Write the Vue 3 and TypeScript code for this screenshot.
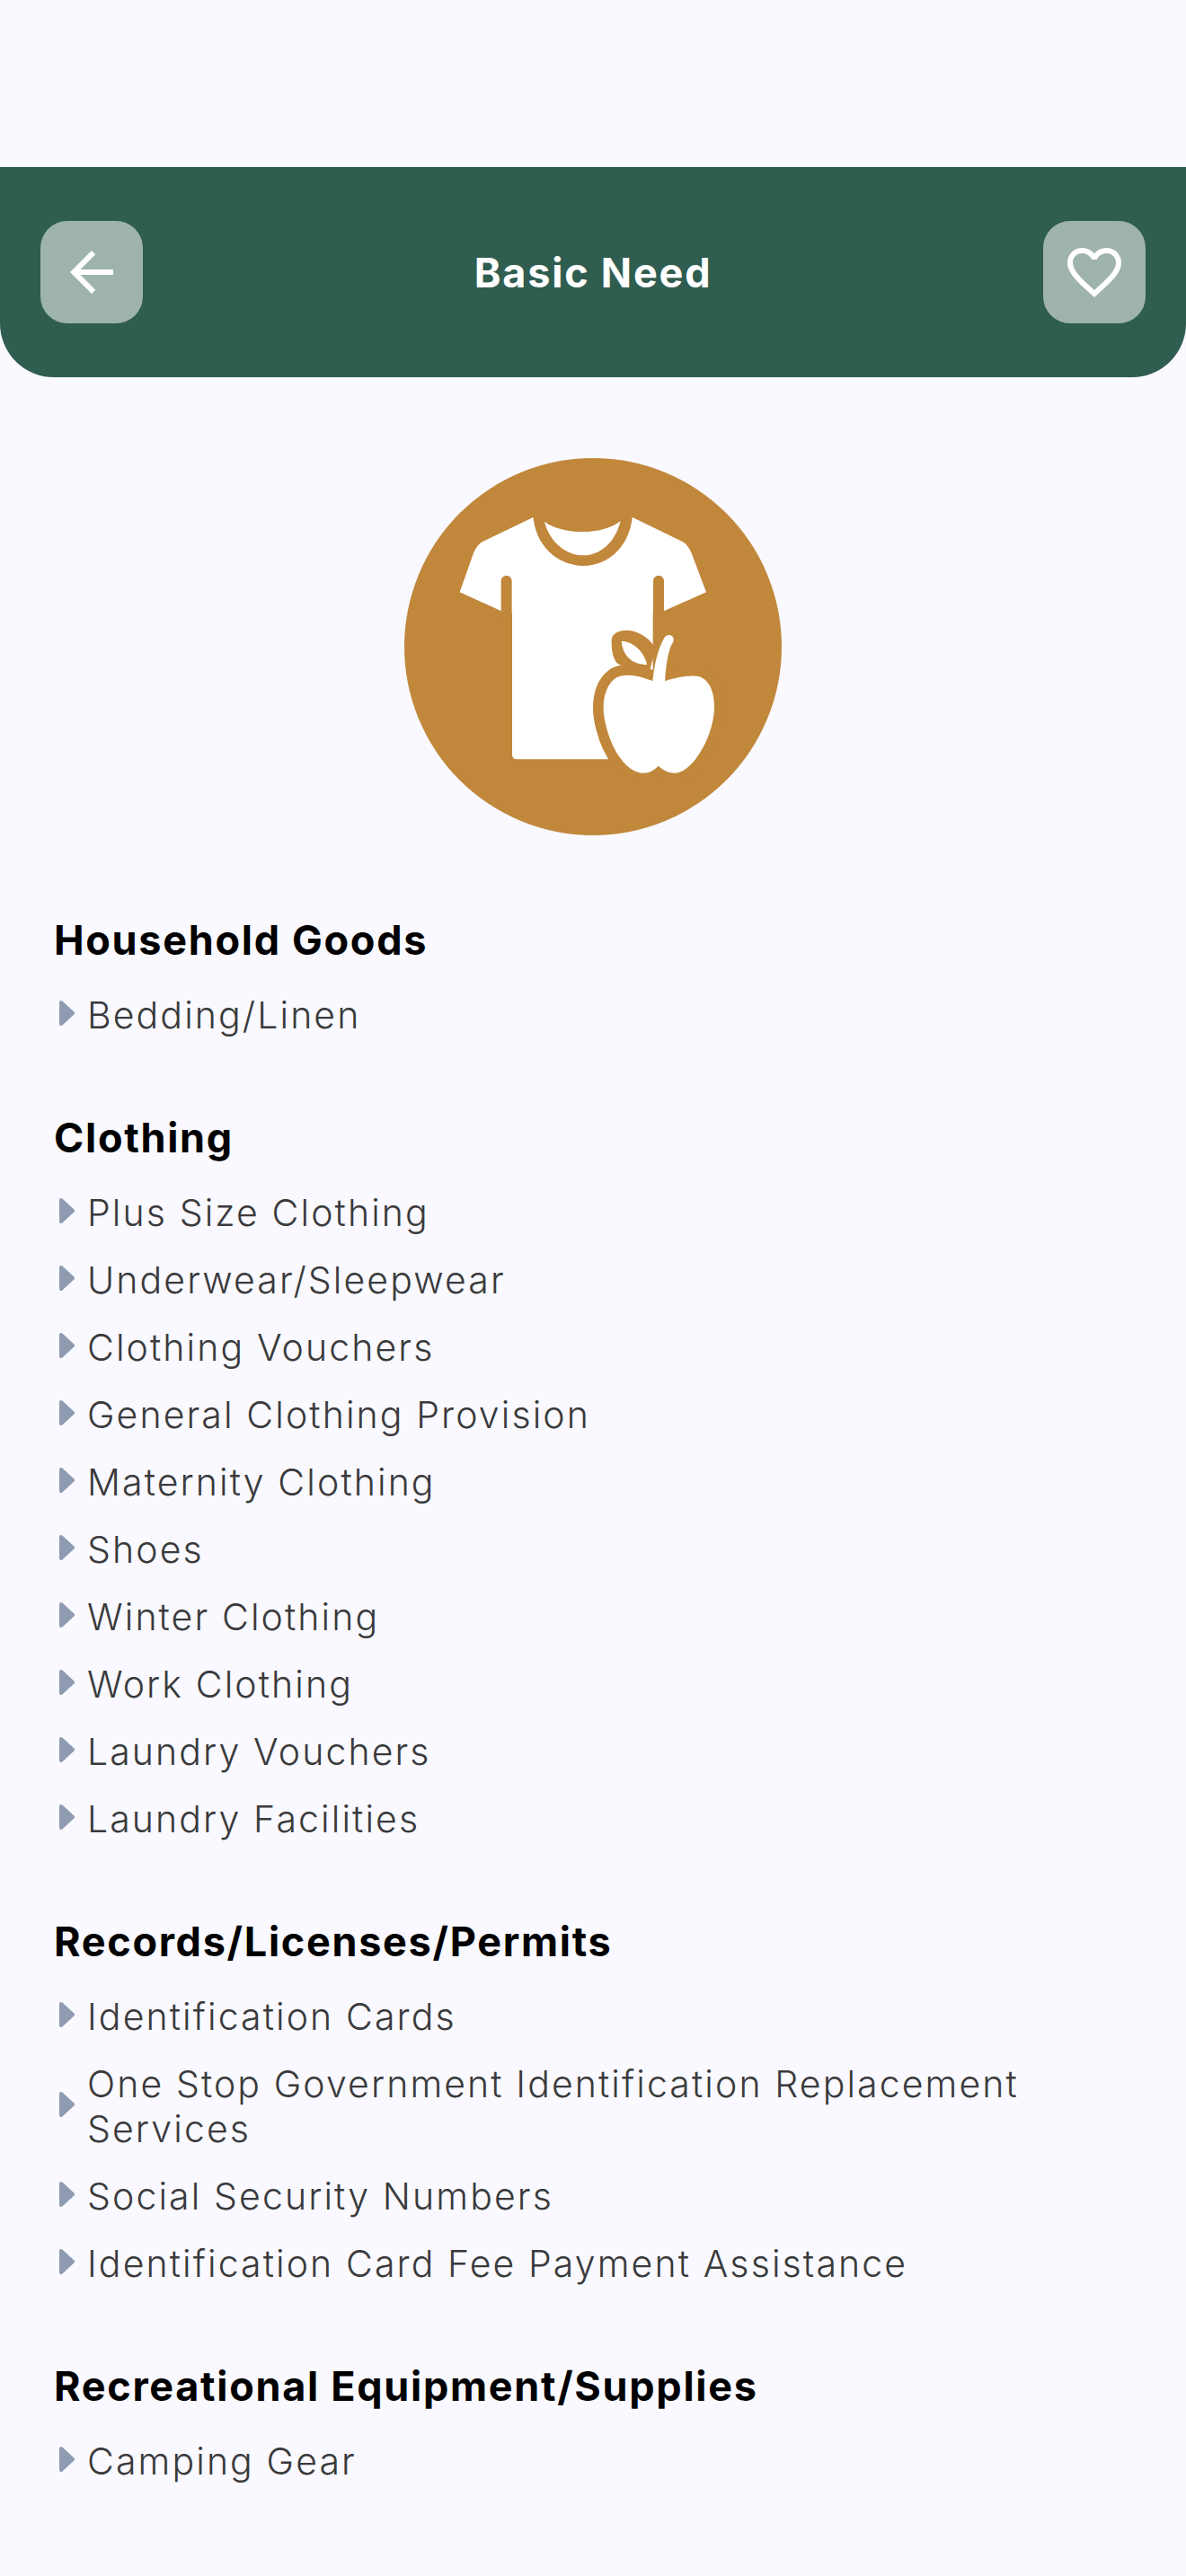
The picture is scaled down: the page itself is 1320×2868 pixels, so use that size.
<script setup lang="ts">
interface Section {
  title: string;
  items: string[];
}

const sections: Section[] = [
  { title: "Household Goods", items: ["Bedding/Linen"] },
  {
    title: "Clothing",
    items: [
      "Plus Size Clothing",
      "Underwear/Sleepwear",
      "Clothing Vouchers",
      "General Clothing Provision",
      "Maternity Clothing",
      "Shoes",
      "Winter Clothing",
      "Work Clothing",
      "Laundry Vouchers",
      "Laundry Facilities",
    ],
  },
  {
    title: "Records/Licenses/Permits",
    items: [
      "Identification Cards",
      "One Stop Government Identification Replacement Services",
      "Social Security Numbers",
      "Identification Card Fee Payment Assistance",
    ],
  },
  { title: "Recreational Equipment/Supplies", items: ["Camping Gear"] },
];
</script>

<template>
  <div class="page">
    <header class="topbar">
      <button class="icon-btn" aria-label="Back">
        <svg viewBox="0 0 24 24" width="72" height="72">
          <path fill="#fff" d="M20 11H7.83l5.59-5.59L12 4l-8 8 8 8 1.41-1.41L7.83 13H20v-2z" />
        </svg>
      </button>
      <h1 class="title">Basic Need</h1>
      <button class="icon-btn" aria-label="Favourite">
        <svg viewBox="0 0 24 24" width="72" height="72">
          <path fill="#fff" d="M16.5 3c-1.74 0-3.41.81-4.5 2.09C10.91 3.81 9.24 3 7.5 3 4.42 3 2 5.42 2 8.5c0 3.78 3.4 6.86 8.55 11.54L12 21.35l1.45-1.32C18.6 15.36 22 12.28 22 8.5 22 5.42 19.58 3 16.5 3zm-4.4 15.55l-.1.1-.1-.1C7.14 14.24 4 11.39 4 8.5 4 6.5 5.5 5 7.5 5c1.54 0 3.04.99 3.57 2.36h1.87C13.46 5.99 14.96 5 16.5 5c2 0 3.5 1.5 3.5 3.5 0 2.89-3.14 5.74-7.9 10.05z" />
        </svg>
      </button>
    </header>

    <main class="content">
      <svg class="hero" viewBox="60 60 1260 1260" width="420" height="420">
        <circle cx="690" cy="690" r="630" fill="#c1873b" />
        <!-- shirt -->
        <path fill="#fff" d="M490 258 L320 340 Q302 350 290 380 L245 508 L400 578 L420 578 V1050 Q420 1066 436 1066 H890 V578 H910 L1068 508 L1020 380 Q1008 350 990 340 L822 258 Z" />
        <path fill="none" stroke="#c1873b" stroke-width="36" stroke-linecap="round" d="M401 470 V600 M909 470 V660" />
        <path fill="#c1873b" d="M490 250 C495 350 570 420 658 420 C745 420 815 350 822 250 Z" />
        <path fill="#fff" d="M528 272 C590 318 725 318 782 270 C765 340 715 385 658 385 C600 385 545 340 528 272 Z" />
        <!-- apple -->
        <path fill="#fff" stroke="#c1873b" stroke-width="70" stroke-linejoin="round" paint-order="stroke" d="M890 805 C850 790 800 775 765 795 C725 825 715 890 735 960 C755 1040 805 1112 858 1112 C880 1112 895 1102 908 1088 C925 1102 940 1112 965 1112 C1020 1112 1095 990 1095 890 C1095 830 1070 790 1035 788 C1000 785 960 795 930 805 Z" />
        <path fill="#c1873b" d="M752 672 C750 640 790 630 825 638 C865 650 895 680 898 700 L880 768 C840 765 790 760 770 745 C755 725 752 700 752 672 Z" />
        <path fill="#fff" d="M785 672 C815 670 860 700 870 750 C825 750 790 725 785 672 Z" />
        <path fill="#fff" d="M888 812 C895 750 905 700 928 660 C935 648 950 648 957 658 C962 668 958 676 952 684 C940 710 932 760 930 812 Z" />
      </svg>

      <section v-for="section in sections" :key="section.title" class="group">
        <h2 class="group-title">{{ section.title }}</h2>
        <ul class="list">
          <li v-for="item in section.items" :key="item" class="row">
            <svg class="bullet" viewBox="0 0 17 28" width="17" height="28">
              <path fill="#8e9bb0" stroke="#8e9bb0" stroke-width="4" stroke-linejoin="round" d="M2 2 L15 14 L2 26 Z" />
            </svg>
            <span>{{ item }}</span>
          </li>
        </ul>
      </section>
    </main>
  </div>
</template>

<style>
html,
body {
  margin: 0;
  background: #f9f9ff;
}
</style>

<style scoped>
.page {
  min-height: 2868px;
  padding-top: 186px;
  box-sizing: border-box;
  background: #f9f9ff;
  font-family: Inter, "Liberation Sans", sans-serif;
}

.topbar {
  height: 234px;
  padding: 0 45px;
  box-sizing: border-box;
  display: flex;
  align-items: center;
  justify-content: space-between;
  background: #2f5d50;
  border-radius: 0 0 60px 60px;
}

.icon-btn {
  width: 114px;
  height: 114px;
  padding: 0;
  border: none;
  border-radius: 30px;
  background: #9fb3ad;
  display: flex;
  align-items: center;
  justify-content: center;
}

.title {
  margin: 0;
  color: #fff;
  font-size: 45px;
  font-weight: 700;
  letter-spacing: 1.8px;
}

.content {
  padding: 90px 60px 0;
  display: flex;
  flex-direction: column;
  gap: 85px;
}

.hero {
  align-self: center;
  display: block;
  margin-bottom: 5px;
}

.group-title {
  margin: 0 0 31px;
  color: #000;
  font-size: 45px;
  line-height: 54px;
  font-weight: 700;
  letter-spacing: 1.7px;
}

.list {
  margin: 0;
  padding: 0;
  list-style: none;
  display: flex;
  flex-direction: column;
  gap: 25px;
}

.row {
  display: flex;
  align-items: center;
  gap: 14px;
  padding-left: 6px;
  color: #3a3a3c;
  font-size: 41px;
  line-height: 50px;
  font-weight: 300;
  letter-spacing: 2.1px;
}

.bullet {
  flex: none;
  margin-top: -4px;
}
</style>
